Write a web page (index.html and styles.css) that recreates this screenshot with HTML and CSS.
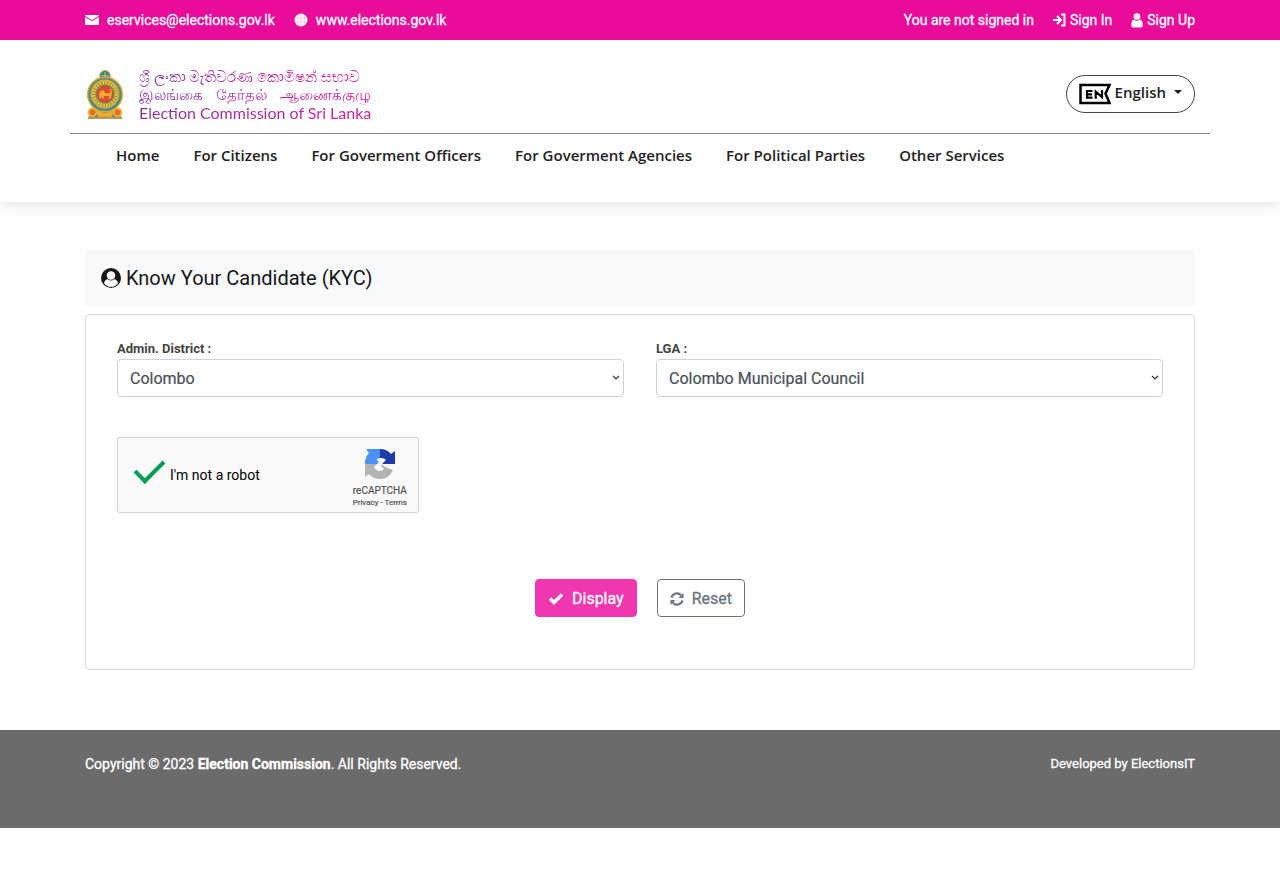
FILE: index.html
```html
<!DOCTYPE html>
<html lang="en">
<head>
<meta charset="utf-8">
<meta name="viewport" content="width=device-width, initial-scale=1">
<title>Know Your Candidate (KYC)</title>
<link rel="stylesheet" href="styles.css">
</head>
<body>
<div class="topbar">
  <div class="container topbar-row">
    <div class="top-group top-contact">
      <a href="#"><svg width="14" height="14" viewBox="0 0 14 14" fill="#fff"><path d="M0 2h14v.8L7 7.2 0 2.800z"/><path d="M0 3.900 7 8.200l7-4.300V12H0z"/></svg>eservices@elections.gov.lk</a>
      <a href="#"><svg width="14" height="14" viewBox="0 0 14 14"><circle cx="7" cy="7" r="6.500" fill="#fff"/><path d="M1 5h12M1 9h12M7 .5v13M4.500 1C3 5 3 9 4.500 13M9.500 1C11 5 11 9 9.500 13" fill="none" stroke="#e90c9a" stroke-width=".2"/></svg>www.elections.gov.lk</a>
    </div>
    <div class="top-group top-account">
      <span>You are not signed in</span>
      <a href="#"><svg width="13" height="14" viewBox="0 0 13 14" fill="none" stroke="#fff" stroke-width="2"><path d="M0 7h7M4 3l4 4-4 4M8 1.500h3.500v11H8"/></svg>Sign In</a>
      <a href="#"><svg width="12" height="15" viewBox="0 0 12 15" fill="#fff"><circle cx="6" cy="3.500" r="3.300"/><path d="M3 6.500Q6 9 9 6.500q2.700.3 2.700 6Q11.700 14.500 10 14.500H2Q.3 14.500.3 12.500.3 6.800 3 6.500z"/></svg>Sign Up</a>
    </div>
  </div>
</div>
<header class="header">
  <div class="container brand-row">
    <a class="brand" href="#">
      <svg width="40" height="50" viewBox="0 0 40 52">
        <circle cx="20" cy="6" r="5.500" fill="#2686a8" stroke="#eda126"/>
        <path d="M20 2v8M16 6h8" stroke="#f3c233"/>
        <path d="M8 39h24l6 12H2z" fill="#2a8eb0"/>
        <path d="M2 50h36M11 41q9 8 18 0l-2 7H13z" fill="#efb52c" stroke="#e0a030" stroke-width="1.500"/>
        <circle cx="7" cy="44" r="4" fill="#e8692b" stroke="#f0b52c" stroke-width="2"/>
        <circle cx="33" cy="44" r="4" fill="#e8692b" stroke="#f0b52c" stroke-width="2"/>
        <ellipse cx="20" cy="25.500" rx="18" ry="18" fill="#3c8f99" stroke="#e7a52a" stroke-width="1.500"/>
        <circle cx="20" cy="25" r="14" fill="#7a8c68" stroke="#e8ac29" stroke-width="2"/>
        <circle cx="20" cy="25" r="11.500" fill="none" stroke="#f1c12f" stroke-width="3" stroke-dasharray="2 1"/>
        <circle cx="20" cy="25" r="8.500" fill="#e4472c" stroke="#b8572a"/>
        <path d="M14 30v-6l2-3h3l1 3h5l1-3-3-1h4v5l-1 5h-2v-3h-5v3h-2v-3l-2 3z" fill="#f3a934"/>
      </svg>
      <span class="brand-text">
        <span class="brand-local" lang="si">ශ්‍රී ලංකා මැතිවරණ කොමිෂන් සභාව</span>
        <span class="brand-local brand-ta" lang="ta"><span>இலங்கை</span> <span>தேர்தல்</span> <span>ஆணைக்குழு</span></span>
        <span class="brand-en">Election Commission of Sri Lanka</span>
      </span>
    </a>
    <button class="lang" type="button">
      <svg width="32" height="22" viewBox="0 0 32 22"><path d="M1.500 2h29L26.500 10.500l4 9.500H1.500z" fill="none" stroke="#000" stroke-width="2.500"/><path d="M7 8h6.500M7 11.300h6M7 14.700h6.500M8 7v8.700M16.700 15.700v-7l6.300 5.500V7" fill="none" stroke="#000" stroke-width="2.200"/></svg>
      <span class="lang-name">English<i class="caret"></i></span>
    </button>
  </div>
  <nav class="nav">
    <a href="#">Home</a><a href="#">For Citizens</a><a href="#">For Goverment Officers</a><a href="#">For Goverment Agencies</a><a href="#">For Political Parties</a><a href="#">Other Services</a>
  </nav>
</header>
<main class="container main">
  <h1 class="title"><svg width="20" height="20" viewBox="0 0 20 20"><circle cx="10" cy="10" r="10" fill="#151719"/><circle cx="10" cy="7.500" r="4.300" fill="#fff"/><path d="M3 15.300Q3.800 11.600 6.800 11.300Q10 13.800 13.200 11.300Q16.200 11.600 17 15.300A8.700 8.700 0 0 1 3 15.300z" fill="#fff"/></svg>Know Your Candidate (KYC)</h1>
  <form class="card">
    <div class="fields">
      <div class="field"><label for="district">Admin. District :</label><span class="select-wrap"><select id="district"><option>Colombo</option></select><svg width="8" height="6" viewBox="0 0 8 6"><path d="M1 1l3 3 3-3" fill="none" stroke="#333" stroke-width="1.200"/></svg></span></div>
      <div class="field"><label for="lga">LGA :</label><span class="select-wrap"><select id="lga"><option>Colombo Municipal Council</option></select><svg width="8" height="6" viewBox="0 0 8 6"><path d="M1 1l3 3 3-3" fill="none" stroke="#333" stroke-width="1.200"/></svg></span></div>
    </div>
    <div class="captcha">
      <input id="robot" type="checkbox" checked><label for="robot">I'm not a robot</label>
      <div class="captcha-brand">
        <svg width="32" height="32" viewBox="0 0 32 32">
          <path d="M16 1v9q-2.500 0-3.500 1.500L15 14l-2 2H1Q1 9 5 5L2 1z" fill="#4a90f5"/>
          <path d="M16 1q7 0 11 5l4-3v13H18l4-4q-2-2.500-6-2z" fill="#1c3aa9"/>
          <path d="M1 16h12l-3 3q2 4 6 4 3 0 4-2l-3-3 1-2q1 3 11 6-4 9-13 9-7 0-11-5l-4 3z" fill="#b3b3b3"/>
        </svg>
        <span class="captcha-name">reCAPTCHA</span>
        <span class="captcha-links"><a href="#">Privacy</a> - <a href="#">Terms</a></span>
      </div>
    </div>
    <div class="actions">
      <button class="btn btn-primary" type="submit"><svg width="16" height="14" viewBox="0 0 16 14"><path d="M2 6.500l4 4L14 2.500" fill="none" stroke="#fff" stroke-width="3.500"/></svg>Display</button>
      <button class="btn btn-outline" type="reset"><svg width="14" height="14" viewBox="0 0 15 15" fill="#6c757d"><path d="M1.500 6A6.200 6.200 0 0 1 12 3.500M13.500 9A6.200 6.200 0 0 1 3 11.500" fill="none" stroke="#6c757d" stroke-width="2.200"/><path d="M14.500 1v5.500H9zM.5 14V8.500H6z"/></svg>Reset</button>
    </div>
  </form>
</main>
<footer class="footer">
  <div class="container footer-row">
    <div>Copyright © 2023 <strong>Election Commission</strong>. All Rights Reserved.</div>
    <div class="credit">Developed by ElectionsIT</div>
  </div>
</footer>
</body>
</html>
```
FILE: styles.css
```css
* { box-sizing: border-box; }
body { margin: 0; background: #fff; color: #212529; font: 400 14px/20px Roboto, "Liberation Sans", sans-serif; }
a { color: inherit; text-decoration: none; }
svg { flex: none; }
button, select { font: inherit; cursor: pointer; }
.container { width: 100%; max-width: 1140px; margin: 0 auto; padding: 0 15px; }

.topbar { position: relative; z-index: 1; background: #e90c9a; color: #fff; -webkit-text-stroke: 0.3px; }
.topbar-row { display: flex; justify-content: space-between; align-items: center; min-height: 40px; }
.top-group, .top-group a { display: flex; align-items: center; }
.top-group { gap: 19px; }
.top-contact a { gap: 8px; }
.top-account a { gap: 4px; }

.header { min-height: 162px; box-shadow: 0 0 16px rgba(0, 0, 0, .15); }
.brand-row { display: flex; justify-content: space-between; align-items: center; min-height: 94px; padding-top: 14px; border-bottom: 1px solid #888; }
.brand { display: flex; align-items: center; gap: 14px; padding-top: 2px; }
.brand-text { display: grid; color: transparent; background: linear-gradient(90deg, #80389a, #d81b98); background-clip: text; -webkit-background-clip: text; }
.brand-text > span { white-space: nowrap; line-height: 18px; }
.brand-local { font-size: 15px; }
.brand-ta { display: flex; justify-content: space-between; }
.brand-en { font: 400 16px Lato, sans-serif; }
.lang { display: flex; align-items: center; gap: 4px; height: 38px; padding: 0 12px; border: 1px solid #444; border-radius: 19px; background: #fff; color: #222; font: 600 15px/20px "Open Sans", sans-serif; }
.lang-name { display: flex; align-items: center; gap: 8px; padding-bottom: 4px; }
.caret { border: 4px solid transparent; border-top-color: #222; border-bottom: 0; }
.nav { display: flex; flex-wrap: wrap; gap: 34px; max-width: 1140px; margin: 0 auto; padding: 11px 46px; color: #222; font: 600 15px/20px "Open Sans", sans-serif; }

.main { padding-top: 48px; padding-bottom: 60px; }
.title { display: flex; align-items: center; gap: 5px; margin: 0 0 8px; padding: 16px; background: #f8f9fb; color: #151719; font-size: 20px; line-height: 24px; font-weight: 400; }
.card { padding: 24px 31px 52px; border: 1px solid #dfdfdf; border-radius: 4px; }
.fields { display: grid; grid-template-columns: 1fr 1fr; gap: 32px; }
.field label { display: block; color: #444; font-size: 13px; line-height: 20px; font-weight: 700; }
.select-wrap { display: grid; align-items: center; }
.select-wrap select, .select-wrap svg { grid-area: 1 / 1; }
.select-wrap svg { justify-self: end; margin-right: 4px; pointer-events: none; }
.select-wrap select { appearance: none; width: 100%; height: 38px; padding: 2px 12px 0; border: 1px solid #ced4da; border-radius: 4px; background: #fff; color: #495057; font-size: 16px; -webkit-text-stroke: 0.2px; }
.captcha { display: flex; align-items: center; width: 302px; height: 76px; margin-top: 40px; padding-left: 15px; border: 1px solid #d3d3d3; border-radius: 3px; background: #f9f9f9; box-shadow: 0 0 4px rgba(0, 0, 0, .08); color: #000; }
.captcha input { appearance: none; width: 28px; height: 28px; margin: 0 9px 6px 0; }
.captcha input:checked::before { content: ""; display: block; width: 25px; height: 12px; margin: 2px 0 0 2px; border: solid #009e55; border-width: 0 0 4px 4px; transform: rotate(-45deg); }
.captcha-brand { display: flex; flex-direction: column; align-items: center; margin-left: auto; padding: 5px 11px 0 0; color: #555; -webkit-text-stroke: 0.2px; }
.captcha-name { font-size: 10px; line-height: 14px; margin-top: 4px; }
.captcha-links { font-size: 8px; line-height: 10px; }
.actions { display: flex; justify-content: center; gap: 20px; margin-top: 66px; }
.btn { display: flex; align-items: center; gap: 8px; height: 38px; padding: 1px 12px 0; border: 1px solid; border-radius: 4px; font-size: 16px; -webkit-text-stroke: 0.3px; }
.btn-primary { border-color: #f037af; background: #f037af; color: #fff; }
.btn-outline { border-color: #6c757d; background: #fff; color: #6c757d; }

.footer { min-height: 98px; padding-top: 24px; background: #6b6b6b; color: #fff; -webkit-text-stroke: 0.3px; }
.footer-row { display: flex; justify-content: space-between; }
.footer strong { font-weight: 700; }
.credit { font-size: 13px; }
```
